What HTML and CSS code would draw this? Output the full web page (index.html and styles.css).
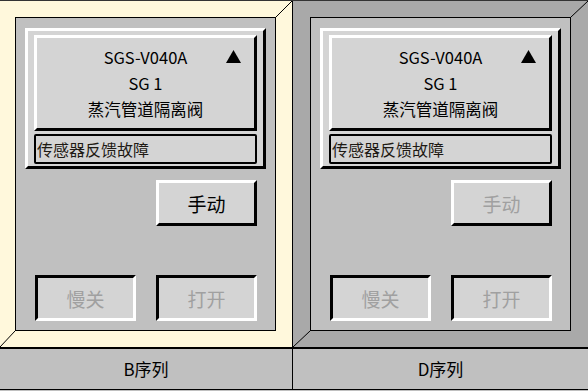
FILE: index.html
```html
<!DOCTYPE html>
<html lang="zh">
<head>
    <meta charset="UTF-8">
    <title>隔离阀控制</title>
    <link rel="stylesheet" href="styles.css">
</head>
<body>
    <div class="screen">
        <div class="panels">
            <section class="panel panel-active">
                <div class="station">
                    <div class="frame">
                        <div class="card">
                            <div class="card-line">SGS-V040A</div>
                            <div class="card-line">SG 1</div>
                            <div class="card-line">蒸汽管道隔离阀</div>
                            <svg class="alarm" viewBox="0 0 15 13"><polygon points="7.5,0 15,13 0,13"/></svg>
                        </div>
                        <div class="status">传感器反馈故障</div>
                    </div>
                    <div class="mode-row">
                        <button class="btn btn-raised">手动</button>
                    </div>
                    <div class="action-row">
                        <button class="btn btn-sunken btn-disabled">慢关</button>
                        <button class="btn btn-sunken btn-disabled">打开</button>
                    </div>
                </div>
                <svg class="corner corner-tr" viewBox="0 0 16 16" preserveAspectRatio="none"><line x1="0" y1="16" x2="16" y2="0"/></svg>
                <svg class="corner corner-bl" viewBox="0 0 15 16" preserveAspectRatio="none"><line x1="0" y1="16" x2="15" y2="0"/></svg>
            </section>
            <section class="panel panel-idle">
                <div class="station">
                    <div class="frame">
                        <div class="card">
                            <div class="card-line">SGS-V040A</div>
                            <div class="card-line">SG 1</div>
                            <div class="card-line">蒸汽管道隔离阀</div>
                            <svg class="alarm" viewBox="0 0 15 13"><polygon points="7.5,0 15,13 0,13"/></svg>
                        </div>
                        <div class="status">传感器反馈故障</div>
                    </div>
                    <div class="mode-row">
                        <button class="btn btn-raised btn-disabled">手动</button>
                    </div>
                    <div class="action-row">
                        <button class="btn btn-sunken btn-disabled">慢关</button>
                        <button class="btn btn-sunken btn-disabled">打开</button>
                    </div>
                </div>
                <svg class="corner corner-tr" viewBox="0 0 17 16" preserveAspectRatio="none"><line x1="0" y1="16" x2="17" y2="0"/></svg>
                <svg class="corner corner-bl" viewBox="0 0 17 16" preserveAspectRatio="none"><line x1="0" y1="16" x2="17" y2="0"/></svg>
            </section>
        </div>
        <div class="tabs">
            <div class="tab">B序列</div>
            <div class="tab">D序列</div>
        </div>
    </div>
</body>
</html>
```

FILE: styles.css
```css
body {
    margin: 0;
    width: 588px;
    height: 391px;
    overflow: hidden;
    background: #c0c0c0;
    font-family: "Noto Sans CJK SC", "Noto Sans", sans-serif;
    color: #000;
}
.screen {
    border-top: 1px solid #333;
}
.panels {
    display: flex;
}
.panel {
    position: relative;
    padding: 16px 16px 16px 15px;
    background: #fff8dc;
    border-right: 1px solid #000;
    border-bottom: 1px solid #000;
}
.panel-idle {
    padding: 16px 17px;
    background: #a9a9a9;
    border-right: none;
}
.station {
    display: flex;
    flex-direction: column;
    width: 261px;
    height: 314px;
    box-sizing: border-box;
    border: 1px solid #000;
    background: #c0c0c0;
}
.frame {
    width: 241px;
    height: 141px;
    box-sizing: border-box;
    margin: 10px 0 0 9px;
    padding: 4px 6px 2px;
    border: 3px solid;
    border-color: #fff #000 #000 #fff;
    background: #d4d4d4;
}
.card {
    position: relative;
    height: 96px;
    box-sizing: border-box;
    padding-top: 6px;
    border: 3px solid;
    border-color: #fff #000 #000 #fff;
    background: #d4d4d4;
    text-align: center;
    font-size: 16.5px;
    line-height: 26px;
}
.alarm {
    position: absolute;
    top: 12px;
    right: 13px;
    width: 15px;
    height: 13px;
    fill: #000;
}
.status {
    height: 30px;
    box-sizing: border-box;
    margin-top: 3px;
    padding-left: 1px;
    border: 2px solid #000;
    border-radius: 2px;
    font-size: 16px;
    line-height: 26px;
    color: #1e1a14;
}
.mode-row {
    margin: 11px 0 0 140px;
}
.action-row {
    display: flex;
    gap: 20px;
    margin: auto 0 9px 19px;
}
.btn {
    width: 101px;
    height: 46px;
    box-sizing: border-box;
    padding: 0;
    border: 3px solid;
    background: #d4d4d4;
    font-family: inherit;
    font-size: 19px;
    color: #000;
}
.btn-raised {
    border-color: #fff #000 #000 #fff;
}
.btn-sunken {
    border-color: #000 #fff #fff #000;
}
.btn-disabled {
    color: #a0a0a0;
}
.corner {
    position: absolute;
    height: 16px;
    stroke: #000;
    stroke-width: 1;
}
.corner-tr {
    top: 0;
    right: 0;
    width: 16px;
}
.corner-bl {
    bottom: 0;
    left: 0;
    width: 15px;
}
.panel-idle .corner-tr,
.panel-idle .corner-bl {
    width: 17px;
}
.tabs {
    display: flex;
    height: 40px;
    border-top: 1px solid #000;
    border-bottom: 1px solid #000;
    font-size: 17px;
    line-height: 40px;
    text-align: center;
}
.tab {
    flex: 1;
}
.tab:first-child {
    flex: none;
    width: 292px;
    border-right: 1px solid #000;
}
```
